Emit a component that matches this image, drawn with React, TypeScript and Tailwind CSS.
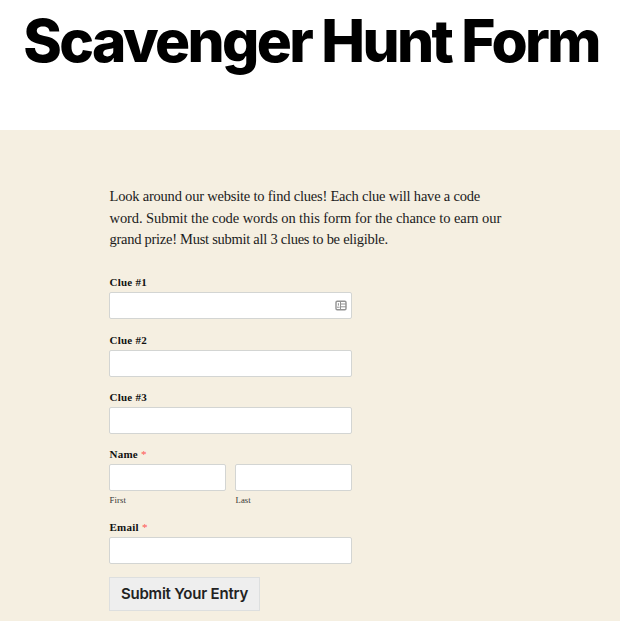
import type { ReactNode } from "react";

const clues = ["Clue #1", "Clue #2", "Clue #3"];

const inputClass =
  "block h-[27px] w-full rounded-[2px] border border-[#d3d5d3] bg-white px-2 text-sm outline-none";

const AutofillIcon = () => {
  return (
    <svg
      className="absolute top-[8px] right-[5px]"
      width="12"
      height="11"
      viewBox="0 0 12 11"
      fill="none"
      stroke="#929292"
    >
      <rect x="1" y="1.3" width="10" height="8.4" rx="1.2" strokeWidth="1.4" />
      <path d="M5.5 1.5v8M5.5 4h5.5M5.5 6.8h5.5" strokeWidth="1" />
      <path d="M3.4 3.2v2.4M2 7.2h2.6" strokeWidth="1" />
    </svg>
  );
};

const Label = ({
  htmlFor,
  required,
  children,
}: {
  htmlFor: string;
  required?: boolean;
  children: ReactNode;
}) => {
  return (
    <label
      htmlFor={htmlFor}
      className="mb-[2px] block h-4 pl-[0.5px] text-[11px] leading-4 font-bold tracking-[0.25px] text-[#111]"
    >
      {children}
      {required && <span className="font-normal text-[#f55]"> *</span>}
    </label>
  );
};

export default function App() {
  return (
    <main className="flex h-[621px] w-[620px] flex-col overflow-hidden bg-white font-['Liberation_Serif',serif]">
      <header className="flex h-[130px] justify-center pt-[6px] pl-[2px]">
        <h1 className="font-['Inter',sans-serif] text-[58.5px] leading-[70px] font-extrabold tracking-[-2.65px] whitespace-nowrap text-black">
          Scavenger Hunt Form
        </h1>
      </header>

      <section className="flex-1 bg-[#f5efe1] pt-[56px] pl-[109px]">
        <p className="pl-[0.5px] text-[14.5px] leading-[21.5px] whitespace-nowrap text-[#1b1b1b]">
          <span className="block tracking-[-0.21px]">
            Look around our website to find clues! Each clue will have a code
          </span>
          <span className="block tracking-[-0.08px]">
            word. Submit the code words on this form for the chance to earn our
          </span>
          <span className="block tracking-[-0.27px]">
            grand prize! Must submit all 3 clues to be eligible.
          </span>
        </p>

        <form className="mt-[23.7px] w-[243px]">
          {clues.map((clue, i) => (
            <div key={clue} className="mb-[12.4px]">
              <Label htmlFor={`clue-${i}`}>{clue}</Label>
              <div className="relative">
                <input id={`clue-${i}`} className={inputClass} />
                {i === 0 && <AutofillIcon />}
              </div>
            </div>
          ))}

          <div>
            <Label htmlFor="first" required>
              Name
            </Label>
            <div className="grid grid-cols-2 gap-[9px] text-[8.7px] leading-[12px] tracking-[0.1px] text-[#333]">
              <div>
                <input id="first" className={inputClass} />
                <span className="mt-[2.4px] block pl-[0.5px]">First</span>
              </div>
              <div>
                <input id="last" className={inputClass} />
                <span className="mt-[2.4px] block pl-[0.5px]">Last</span>
              </div>
            </div>
          </div>

          <div className="mt-[13px]">
            <Label htmlFor="email" required>
              Email
            </Label>
            <input id="email" className={inputClass} />
          </div>

          <button
            type="button"
            className="mt-[13px] flex h-[34px] w-[151px] items-center justify-center border border-[#dddfdf] bg-[#eee] pt-[1px] font-['Inter',sans-serif] text-[15px] font-semibold tracking-[-0.2px] whitespace-nowrap text-[#222]"
          >
            Submit Your Entry
          </button>
        </form>
      </section>
    </main>
  );
}
